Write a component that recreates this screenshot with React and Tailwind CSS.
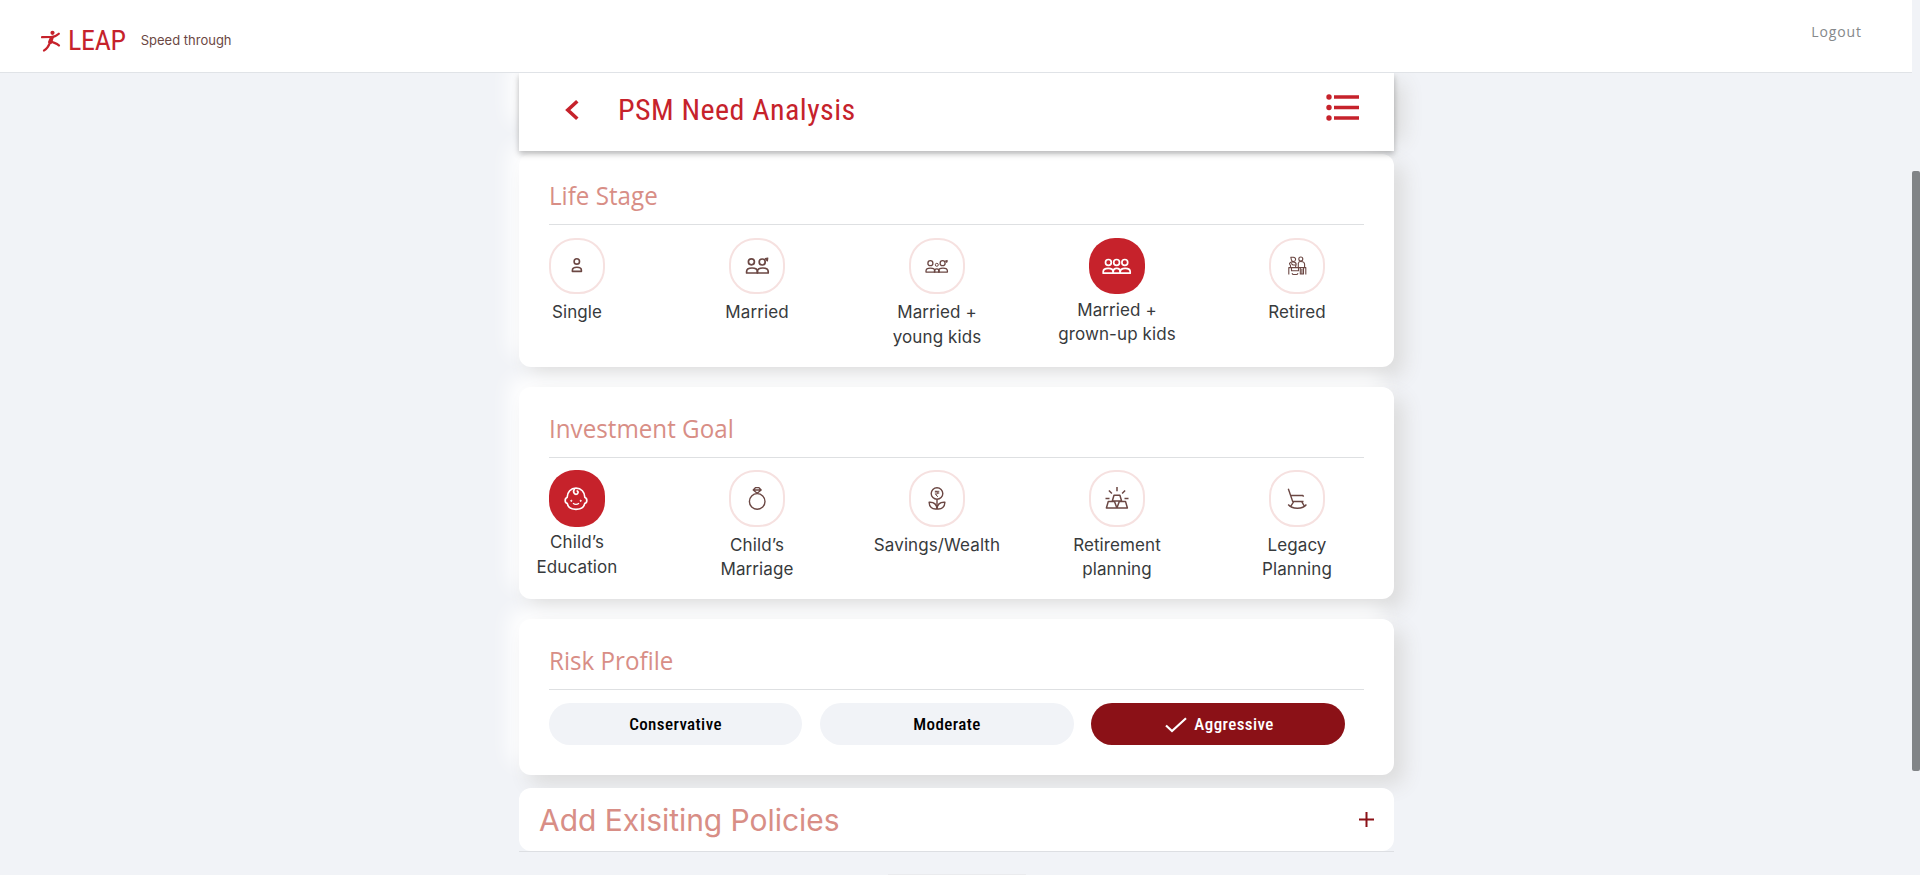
import React from "react";

const BROWN = "#6b4743";

function Body({ x, y, w, h }) {
  return (
    <path d={`M${x} ${y + h} v-${h * 0.3} q0 -${h * 0.7} ${w / 2} -${h * 0.7} q${w / 2} 0 ${w / 2} ${h * 0.7} v${h * 0.3} z`} />
  );
}

const icons = {
  single: (
    <g strokeWidth="1.6">
      <circle cx="27.8" cy="23.4" r="2.7" />
      <Body x={23.4} y={29.2} w={9} h={4.2} />
    </g>
  ),
  married: (
    <g strokeWidth="1.7">
      <circle cx="22.4" cy="23.8" r="3" />
      <circle cx="33.2" cy="24" r="3" />
      <Body x={17.6} y={30} w={10.8} h={5} />
      <Body x={28.4} y={30} w={10.8} h={5} />
      <path d="M36.200 20.700l2.600-.7-.4 3z" fill="currentColor" strokeWidth="1.200" />
    </g>
  ),
  young: (
    <g strokeWidth="1.3">
      <circle cx="21.4" cy="25.2" r="2.5" />
      <circle cx="27.8" cy="26.8" r="1.5" strokeWidth="1" />
      <circle cx="33.6" cy="25.2" r="2.5" />
      <Body x={17} y={30.2} w={8.8} h={3.9} />
      <Body x={25.4} y={30.8} w={4.8} h={3.300} />
      <Body x={29.6} y={30.2} w={8.8} h={3.9} />
      <path d="M36.300 23l2-.5-.4 2z" fill="currentColor" strokeWidth="1" />
    </g>
  ),
  grown: (
    <g strokeWidth="1.7">
      <circle cx="19.4" cy="24.4" r="2.9" />
      <circle cx="27.6" cy="24.4" r="2.9" />
      <circle cx="35.8" cy="24.4" r="2.9" />
      <Body x={14.2} y={30.400} w={10} h={4.8} />
      <Body x={24.200} y={30.400} w={7} h={4.8} />
      <Body x={31.200} y={30.400} w={10} h={4.8} />
    </g>
  ),
  retired: (
    <g strokeWidth="1.1">
      <path d="M19.800 36.500v-6.900h17v6.900M22.500 29.600v3.200h7v-3.200M23 35.200q.5 1.300 1.500 1.300h3q1 0 1.500-1.300M31.300 29.600v6.400h3.200v-6.400M32.900 31v5" />
      <circle cx="31.800" cy="21" r="2" />
      <path d="M29.300 29v-3.600q.4-1.900 2.500-1.900 3.800 0 3.800 3V29" />
      <path d="M21.800 19.200h2.500q2.500.3 2.300 2.300t-2.300 2q-2-.3-2-2zM21.500 29v-1.500q-1-1-1-2.200 1-1.400 3.500-1.400 2.800 0 3.200 2.200l-.7 2.900M22 25.300l2 1.700h3" />
    </g>
  ),
  baby: (
    <g strokeWidth="1.7">
      <path d="M27 18.200c-5.200 0-8.700 3.800-8.900 9.300-2.500.6-2.600 5.400.1 5.900.8 3.900 3.400 5.900 8.800 5.900s8-2 8.800-5.900c2.700-.5 2.600-5.300.1-5.900-.2-5.500-3.700-9.300-8.900-9.300z" />
      <path d="M25.500 18.700c-1.700 2.800-.8 5.600 1.500 5.600 2.400 0 2.900-3.400.6-3.500" />
      <path d="M24 33.200q3 2.200 6 0" strokeWidth="1.300" />
      <circle cx="22.300" cy="30.800" r=".6" fill="currentColor" strokeWidth="1" />
      <circle cx="31.700" cy="30.800" r=".6" fill="currentColor" strokeWidth="1" />
    </g>
  ),
  ring: (
    <g strokeWidth="1.4">
      <circle cx="28.200" cy="31.400" r="7.800" />
      <path d="M28.200 23.200l-4-3.200 2.200-2.300h3.600l2.200 2.300zM24.500 20h7.400" strokeWidth="1.300" />
    </g>
  ),
  savings: (
    <g strokeWidth="1.400">
      <circle cx="28" cy="23.500" r="5.800" />
      <path d="M28 29.500V39" />
      <path d="M28 38.800c-5 .8-7.800-2-7.900-6.500 4.400-.3 7.500 2 7.900 6.500zM28 38.800c.4-4.500 3.400-6.800 7.900-6.500-.1 4.500-2.900 7.300-7.900 6.500z" />
      <path d="M25.800 21.300h4.500M25.800 23h4.500M26.500 21.300c3.200 0 3.200 3.200 0 3.200l2.500 2.300" strokeWidth="1" />
    </g>
  ),
  gold: (
    <g strokeWidth="1.500">
      <path d="M23.300 31l1.700-5.700h5.900l1.700 5.700zM17.400 38l1.900-6.600h6.200l2.400 6.600zM27.900 38l2.400-6.600h6.200l1.900 6.600zM28 17v4.200M19.900 20.500l3 3M36.100 20.500l-3 3M16.500 28.500h4M35.500 28.500h4" />
    </g>
  ),
  chair: (
    <g strokeWidth="1.400">
      <path d="M19.300 18.800l4.400 12.700h10.800M21.800 25.500h12l.8 1.200M24.700 31.700l-3 4.600M32.700 31.700l2.800 4.600M19.200 34.500c3.800 4.800 14.400 5.200 18.200 0" />
    </g>
  ),
};

const label = "whitespace-nowrap text-center font-[Inter,sans-serif] text-[17px] tracking-[0.1px] text-[#373a3c]";

function Option({ icon, lines, active, circle, tight, loose }) {
  return (
    <div className="flex w-14 shrink-0 flex-col items-center">
      <div
        className={`${circle} w-14 shrink-0 rounded-[26px] ${
          active ? "bg-[#c6222b] text-white" : "border-2 border-[#f6e1e0] bg-white text-[#6b4743]"
        }`}
      >
        <svg
          viewBox="0 0 56 56"
          className={`h-14 w-14 ${active ? "" : "-mt-0.5 -ml-0.5"}`}
          fill="none"
          stroke={active ? "#fff" : BROWN}
          strokeLinecap="butt"
          strokeLinejoin="round"
        >
          {icons[icon]}
        </svg>
      </div>
      <div className={`${label} ${active ? tight : loose}`}>
        {lines.map((l) => (
          <div key={l}>{l}</div>
        ))}
      </div>
    </div>
  );
}

const cardShadow =
  "shadow-[10px_10px_20px_#dcdcdc,-10px_-10px_20px_#ffffff]";

function Card({ title, height, children }) {
  return (
    <section className={`mb-5 ${height} rounded-[12px] bg-white px-[30px] ${cardShadow}`}>
      <h2 className="h-[70px] pt-[23px] font-['Open_Sans',sans-serif] text-[26px] leading-9 whitespace-nowrap text-[#d88e86]">
        <span className="inline-block origin-left scale-x-[0.93]">{title}</span>
      </h2>
      <div className="h-px bg-[#dee0e2]" />
      {children}
    </section>
  );
}

const stages = [
  { icon: "single", lines: ["Single"] },
  { icon: "married", lines: ["Married"] },
  { icon: "young", lines: ["Married +", "young kids"] },
  { icon: "grown", lines: ["Married +", "grown-up kids"], active: true },
  { icon: "retired", lines: ["Retired"] },
];

const goals = [
  { icon: "baby", lines: ["Child’s", "Education"], active: true },
  { icon: "ring", lines: ["Child’s", "Marriage"] },
  { icon: "savings", lines: ["Savings/Wealth"] },
  { icon: "gold", lines: ["Retirement", "planning"] },
  { icon: "chair", lines: ["Legacy", "Planning"] },
];

const pill =
  "flex h-[42px] items-center justify-center rounded-[21px] pt-px font-['Roboto_Condensed',sans-serif] text-[17px] font-medium tracking-[0.4px]";

export default function App() {
  return (
    <div className="flex h-[875px] w-[1920px] overflow-hidden bg-[#f1f3f7]">
      <div className="flex w-[1912px] flex-col">
        <header className="z-20 flex h-[73px] shrink-0 justify-between border-b border-[#e0e3e7] bg-white pr-[50px] pl-[41px]">
          <div className="flex pt-[23px]">
            <svg viewBox="0 0 20 22" className="mt-[7px] h-[22px] w-5" fill="none" stroke="#c6222b" strokeLinecap="round" strokeLinejoin="round">
              <circle cx="11.500" cy="2.800" r="2.100" fill="#c6222b" stroke="none" />
              <path d="M1 7.200l8.500-.2q4.500.2 8.300-3.300" strokeWidth="2.200" />
              <path d="M10 7l2 0-2 6-2-1z" strokeWidth="2" fill="#c6222b" />
              <path d="M9.500 11.500c-2 5-3.500 7.700-6.500 9M9.800 11.500c3.500 1.500 6.200 1.700 8.200 4" strokeWidth="2.200" />
            </svg>
            <span className="ml-[7px] pt-px font-['Roboto_Condensed',sans-serif] text-[28px] leading-[34px] tracking-[-0.3px] text-[#c6222b]">
              LEAP
            </span>
            <span className="ml-[15px] pt-[7px] font-[Inter,sans-serif] text-[13px] leading-5 text-[#6b4743]">
              Speed through
            </span>
          </div>
          <span className="pt-[22px] font-['Open_Sans',sans-serif] text-[14px] leading-5 tracking-[0.9px] text-[#85888b]">
            Logout
          </span>
        </header>

        <main className="ml-[519px] flex w-[875px] flex-col">
          <div className="z-10 flex h-[78px] shrink-0 justify-between bg-white pr-[35px] pl-[46px] shadow-[0_3px_6px_rgba(0,0,0,0.26)]">
            <div className="flex">
              <svg viewBox="0 0 14 22" className="mt-[26px] h-[22px] w-[14px]" fill="none" stroke="#c6222b" strokeWidth="3.600">
                <path d="M12.300 2.200L2.800 11l9.500 8.800" />
              </svg>
              <h1 className="ml-[38px] pt-5 pl-px font-['Roboto_Condensed',sans-serif] text-[30px] leading-[34px] tracking-[0.45px] text-[#c6222b]">
                PSM Need Analysis
              </h1>
            </div>
            <svg viewBox="0 0 33 28" className="mt-5 h-7 w-[33px]" fill="#c6222b">
              <circle cx="3" cy="4" r="2.700" />
              <circle cx="3" cy="14.500" r="2.700" />
              <circle cx="3" cy="25" r="2.700" />
              <path d="M8 2.200h25v3.600H8zM8 12.700h25v3.600H8zM8 23.200h25v3.600H8z" />
            </svg>
          </div>
          <div className={`-mt-[78px] mb-5 h-[61px] shrink-0 rounded-b-[12px] bg-white ${cardShadow}`} />

          <Card title="Life Stage" height="h-[213px]">
            <div className="flex gap-[124px] pt-[13px]">
              {stages.map((s) => (
                <Option key={s.icon} {...s} circle="h-14" tight="mt-1 leading-6" loose="mt-[6px] leading-[25px]" />
              ))}
            </div>
          </Card>

          <Card title="Investment Goal" height="h-[212px]">
            <div className="flex gap-[124px] pt-3">
              {goals.map((g) => (
                <Option key={g.icon} {...g} circle="h-[57px]" tight="mt-[3px] leading-[25px]" loose="mt-[6px] leading-6" />
              ))}
            </div>
          </Card>

          <Card title="Risk Profile" height="h-[156px]">
            <div className="flex pt-[13px]">
              <button className={`${pill} mr-[18px] w-[253px] bg-[#f1f3f7] text-black`}>Conservative</button>
              <button className={`${pill} mr-[17px] w-[254px] bg-[#f1f3f7] text-black`}>Moderate</button>
              <button className={`${pill} w-[254px] bg-[#8b1117] pl-[3px] text-white`}>
                <svg viewBox="0 0 22 16" className="mr-[7px] h-4 w-[22px]" fill="none" stroke="#fff" strokeWidth="2.200">
                  <path d="M1 8.500l6 5.500L21 1.200" />
                </svg>
                Aggressive
              </button>
            </div>
          </Card>

          <section className="z-10 -mt-[7px] h-[64px] border-b border-[#dddfe3]">
            <div className="flex h-[63px] items-center justify-between rounded-[12px] bg-white pr-5 pl-5">
              <h2 className="font-[Inter,sans-serif] text-[30px] leading-9 tracking-[-0.05px] text-[#d88e86]">Add Exisiting Policies</h2>
              <svg viewBox="0 0 15 15" className="h-[15px] w-[15px]" stroke="#8b1117" strokeWidth="2">
                <path d="M7.500 0v15M0 7.500h15" />
              </svg>
            </div>
          </section>
          <div className="mx-auto mt-[22px] h-px w-[138px] bg-[#eaebee]" />
        </main>
      </div>
      <div className="z-20 w-2 pt-[171px]">
        <div className="h-[600px] rounded-[2px] bg-[#818487]" />
      </div>
    </div>
  );
}
